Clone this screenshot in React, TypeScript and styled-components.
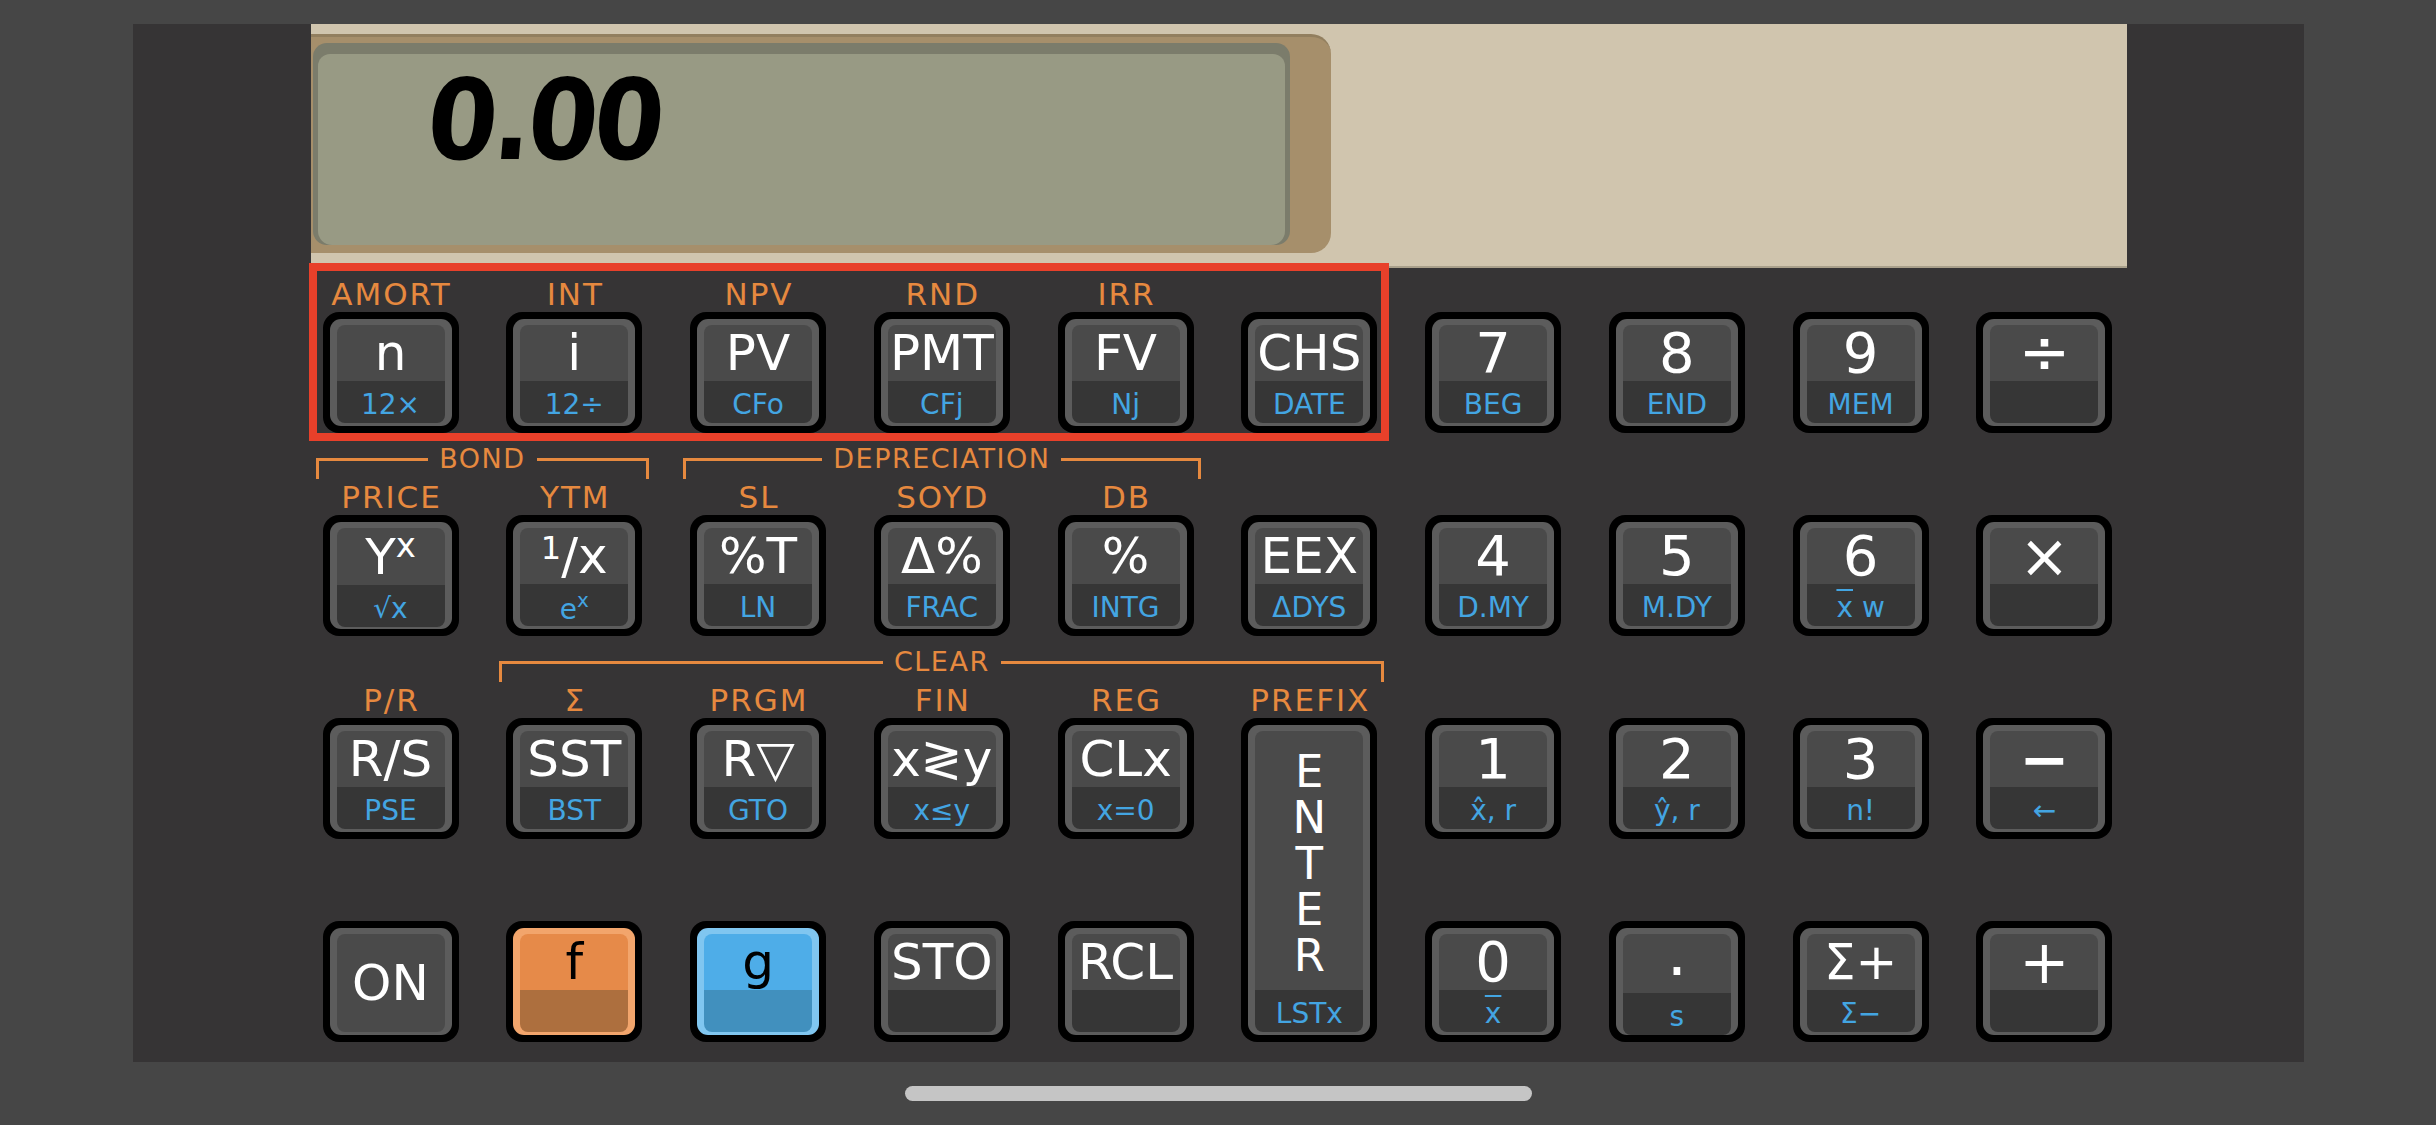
import React from "react";
import styled, { createGlobalStyle } from "styled-components";

/* HP-12C 스타일 계산기 화면 — 상단 LCD, 10열 키패드, 첫 줄 하이라이트 */

const ORANGE = "#e6893f";
const BLUE = "#43a5e2";

type Tone = "gray" | "orange" | "blue";

const TONES: Record<Tone, { rim: string; top: string; bottom: string; ink: string }> = {
  gray: { rim: "#5c5c5c", top: "#4a4a4a", bottom: "#363636", ink: "#ffffff" },
  orange: { rim: "#f2a56c", top: "#e68a49", bottom: "#ad6f3e", ink: "#000000" },
  blue: { rim: "#80c6f0", top: "#4eade8", bottom: "#4190be", ink: "#000000" },
};

const GlobalStyle = createGlobalStyle`
  html, body {
    margin: 0;
    padding: 0;
    background: #464646;
  }
  body {
    font-family: "DejaVu Sans", "Liberation Sans", sans-serif;
  }
`;

const Screen = styled.div`
  width: 2436px;
  height: 1125px;
  display: flex;
  flex-direction: column;
  align-items: center;
  overflow: hidden;
`;

const Body = styled.main`
  margin-top: 24px;
  width: 2171px;
  height: 1038px;
  box-sizing: border-box;
  padding: 0 177px 0 178px;
  background: #363435;
  display: flex;
  flex-direction: column;
`;

const DisplayBand = styled.section`
  height: 244px;
  box-sizing: border-box;
  padding-top: 10px;
  background: #d0c5ae;
  border-bottom: 2px solid #a9a08b;
`;

const LcdBezel = styled.div`
  width: 1020px;
  height: 219px;
  box-sizing: border-box;
  padding: 6px 41px 8px 2px;
  background: #a68f6b;
  border-top: 3px solid #927f5f;
  border-radius: 0 20px 20px 0;
`;

const LcdFrame = styled.div`
  height: 100%;
  box-sizing: border-box;
  padding: 11px 5px 0;
  background: #7b7c6b;
  border-radius: 14px;
`;

const LcdGlass = styled.div`
  height: 100%;
  box-sizing: border-box;
  padding: 10px 0 0 110px;
  background: #989a84;
  border-radius: 12px 12px 14px 14px;
`;

const Readout = styled.span`
  display: inline-block;
  font-family: "DejaVu Sans Condensed", "DejaVu Sans", sans-serif;
  font-weight: bold;
  font-size: 112px;
  line-height: 1;
  letter-spacing: -4px;
  color: #000;
  transform: skewX(-5deg);
`;

const Keypad = styled.section`
  position: relative;
  display: grid;
  grid-template-columns: repeat(10, 136px);
  grid-template-rows: 36px 121px 46px 36px 121px 46px 36px 121px 46px 36px 121px;
  column-gap: 47.78px;
  padding: 8px 12px 0;
`;

const Highlight = styled.div`
  position: absolute;
  top: -5px;
  left: -2px;
  width: 1080px;
  height: 178px;
  box-sizing: border-box;
  border: 8px solid #e8402a;
  pointer-events: none;
`;

const ShiftLabel = styled.div<{ $col: number; $row: number }>`
  grid-column: ${(p) => p.$col};
  grid-row: ${(p) => p.$row};
  text-align: center;
  font-size: 31px;
  line-height: 36px;
  letter-spacing: 2px;
  margin-right: -2px;
  color: ${ORANGE};
  white-space: nowrap;
`;

const Bracket = styled.div<{ $from: number; $to: number; $row: number }>`
  grid-column: ${(p) => p.$from} / ${(p) => p.$to};
  grid-row: ${(p) => p.$row};
  margin: 0 -7px;
  display: flex;
  align-items: flex-start;
  padding-top: 25px;
`;

const BracketArm = styled.span<{ $side: "left" | "right" }>`
  flex: 1;
  height: 21px;
  box-sizing: border-box;
  border-top: 3px solid ${ORANGE};
  border-${(p) => p.$side}: 3px solid ${ORANGE};
`;

const BracketText = styled.span`
  margin-top: -13px;
  padding: 0 11px;
  font-size: 27px;
  line-height: 27px;
  letter-spacing: 1.5px;
  color: ${ORANGE};
`;

const KeySlot = styled.div<{ $col: number; $row: string }>`
  grid-column: ${(p) => p.$col};
  grid-row: ${(p) => p.$row};
`;

const KeyCap = styled.div`
  height: 100%;
  box-sizing: border-box;
  padding: 7px;
  background: #000;
  border-radius: 16px;
`;

const KeyRim = styled.div<{ $tone: Tone }>`
  height: 100%;
  box-sizing: border-box;
  padding: 6px 7px 3px;
  display: flex;
  flex-direction: column;
  background: ${(p) => TONES[p.$tone].rim};
  border-radius: 11px;
`;

const KeyTop = styled.div<{ $tone: Tone; $size: number; $flat?: boolean }>`
  flex: 1;
  display: flex;
  justify-content: center;
  align-items: ${(p) => (p.$flat ? "center" : "flex-start")};
  background: ${(p) => TONES[p.$tone].top};
  border-radius: ${(p) => (p.$flat ? "8px" : "8px 8px 0 0")};
  color: ${(p) => TONES[p.$tone].ink};
  font-size: ${(p) => p.$size}px;
  line-height: 56px;
  white-space: nowrap;
`;

const MainText = styled.span`
  display: block;
`;

const KeyBottom = styled.div<{ $tone: Tone }>`
  height: 42px;
  box-sizing: border-box;
  padding-top: 6px;
  background: ${(p) => TONES[p.$tone].bottom};
  border-radius: 0 0 8px 8px;
  color: ${BLUE};
  font-size: 28px;
  line-height: 36px;
  text-align: center;
  white-space: nowrap;
`;

const EnterStack = styled.div`
  flex: 1;
  display: flex;
  align-items: center;
  justify-content: center;
  padding-bottom: 2px;
  background: #4a4a4a;
  border-radius: 8px 8px 0 0;
  color: #fff;
`;

const EnterWord = styled.span`
  writing-mode: vertical-rl;
  text-orientation: upright;
  font-size: 45px;
  letter-spacing: -7px;
  line-height: 1;
`;

const Sup = styled.span<{ $size: number; $lift: number }>`
  font-size: ${(p) => p.$size}px;
  vertical-align: ${(p) => p.$lift}px;
  line-height: 1;
`;

const Over = styled.span`
  text-decoration: overline;
`;

const Heavy = styled.span`
  font-weight: bold;
`;

const Dot = styled.span`
  display: inline-block;
  font-size: 64px;
  transform: translateY(-9px);
`;

const HomeBar = styled.div`
  margin-top: 24px;
  width: 627px;
  height: 15px;
  border-radius: 8px;
  background: #c5c5c5;
`;

type KeyDef = {
  col: number;
  main: React.ReactNode;
  sub?: React.ReactNode;
  top?: string;
  size?: number;
  tone?: Tone;
  flat?: boolean;
};

const ROWS: KeyDef[][] = [
  [
    { col: 1, top: "AMORT", main: "n", sub: "12×" },
    { col: 2, top: "INT", main: "i", sub: "12÷" },
    { col: 3, top: "NPV", main: "PV", sub: "CFo" },
    { col: 4, top: "RND", main: "PMT", sub: "CFj" },
    { col: 5, top: "IRR", main: "FV", sub: "Nj" },
    { col: 6, main: "CHS", sub: "DATE" },
    { col: 7, main: "7", sub: "BEG", size: 56 },
    { col: 8, main: "8", sub: "END", size: 56 },
    { col: 9, main: "9", sub: "MEM", size: 56 },
    { col: 10, main: "÷", size: 62 },
  ],
  [
    {
      col: 1,
      top: "PRICE",
      main: (
        <>
          Y<Sup $size={34} $lift={17}>x</Sup>
        </>
      ),
      sub: "√x",
    },
    {
      col: 2,
      top: "YTM",
      main: (
        <>
          <Sup $size={32} $lift={14}>1</Sup>/x
        </>
      ),
      sub: (
        <>
          e<Sup $size={20} $lift={12}>x</Sup>
        </>
      ),
    },
    { col: 3, top: "SL", main: "%T", sub: "LN" },
    { col: 4, top: "SOYD", main: "Δ%", sub: "FRAC" },
    { col: 5, top: "DB", main: "%", sub: "INTG" },
    { col: 6, main: "EEX", sub: "ΔDYS" },
    { col: 7, main: "4", sub: "D.MY", size: 56 },
    { col: 8, main: "5", sub: "M.DY", size: 56 },
    {
      col: 9,
      main: "6",
      sub: (
        <>
          <Over>x</Over> w
        </>
      ),
      size: 56,
    },
    { col: 10, main: "×", size: 60 },
  ],
  [
    { col: 1, top: "P/R", main: "R/S", sub: "PSE" },
    { col: 2, top: "Σ", main: "SST", sub: "BST" },
    { col: 3, top: "PRGM", main: "R▽", sub: "GTO" },
    { col: 4, top: "FIN", main: "x≷y", sub: "x≤y" },
    { col: 5, top: "REG", main: "CLx", sub: "x=0" },
    { col: 7, main: "1", sub: "x̂, r", size: 56 },
    { col: 8, main: "2", sub: "ŷ, r", size: 56 },
    { col: 9, main: "3", sub: "n!", size: 56 },
    { col: 10, main: <Heavy>−</Heavy>, sub: "←", size: 60 },
  ],
  [
    { col: 1, main: "ON", flat: true },
    { col: 2, main: "f", tone: "orange" },
    { col: 3, main: "g", tone: "blue" },
    { col: 4, main: "STO" },
    { col: 5, main: "RCL" },
    { col: 7, main: "0", sub: <Over>x</Over>, size: 56 },
    { col: 8, main: <Dot>.</Dot>, sub: "s", size: 56 },
    { col: 9, main: "Σ+", sub: "Σ−" },
    { col: 10, main: "+", size: 60 },
  ],
];

/* 그리드 행: 라벨 1·4·7, 키 2·5·8·11, 괄호 3·6 */
const KEY_ROW = [2, 5, 8, 11];
const LABEL_ROW = [1, 4, 7, 10];

function Key({ def, row }: { def: KeyDef; row: number }) {
  const tone = def.tone ?? "gray";
  return (
    <KeySlot $col={def.col} $row={String(row)}>
      <KeyCap>
        <KeyRim $tone={tone}>
          <KeyTop $tone={tone} $size={def.size ?? 50} $flat={def.flat}>
            <MainText>{def.main}</MainText>
          </KeyTop>
          {!def.flat && <KeyBottom $tone={tone}>{def.sub}</KeyBottom>}
        </KeyRim>
      </KeyCap>
    </KeySlot>
  );
}

function BracketLabel({ from, to, row, text }: { from: number; to: number; row: number; text: string }) {
  return (
    <Bracket $from={from} $to={to} $row={row}>
      <BracketArm $side="left" />
      <BracketText>{text}</BracketText>
      <BracketArm $side="right" />
    </Bracket>
  );
}

export default function App() {
  return (
    <>
      <GlobalStyle />
      <Screen>
        <Body>
          <DisplayBand>
            <LcdBezel>
              <LcdFrame>
                <LcdGlass>
                  <Readout>0.00</Readout>
                </LcdGlass>
              </LcdFrame>
            </LcdBezel>
          </DisplayBand>
          <Keypad>
            {ROWS.map((keys, r) =>
              keys.map((def) => (
                <React.Fragment key={`${r}-${def.col}`}>
                  {def.top && (
                    <ShiftLabel $col={def.col} $row={LABEL_ROW[r]}>
                      {def.top}
                    </ShiftLabel>
                  )}
                  <Key def={def} row={KEY_ROW[r]} />
                </React.Fragment>
              ))
            )}
            <ShiftLabel $col={6} $row={7}>
              PREFIX
            </ShiftLabel>
            <KeySlot $col={6} $row="8 / 12">
              <KeyCap>
                <KeyRim $tone="gray">
                  <EnterStack>
                    <EnterWord>ENTER</EnterWord>
                  </EnterStack>
                  <KeyBottom $tone="gray">LSTx</KeyBottom>
                </KeyRim>
              </KeyCap>
            </KeySlot>
            <BracketLabel from={1} to={3} row={3} text="BOND" />
            <BracketLabel from={3} to={6} row={3} text="DEPRECIATION" />
            <BracketLabel from={2} to={7} row={6} text="CLEAR" />
            <Highlight />
          </Keypad>
        </Body>
        <HomeBar />
      </Screen>
    </>
  );
}
